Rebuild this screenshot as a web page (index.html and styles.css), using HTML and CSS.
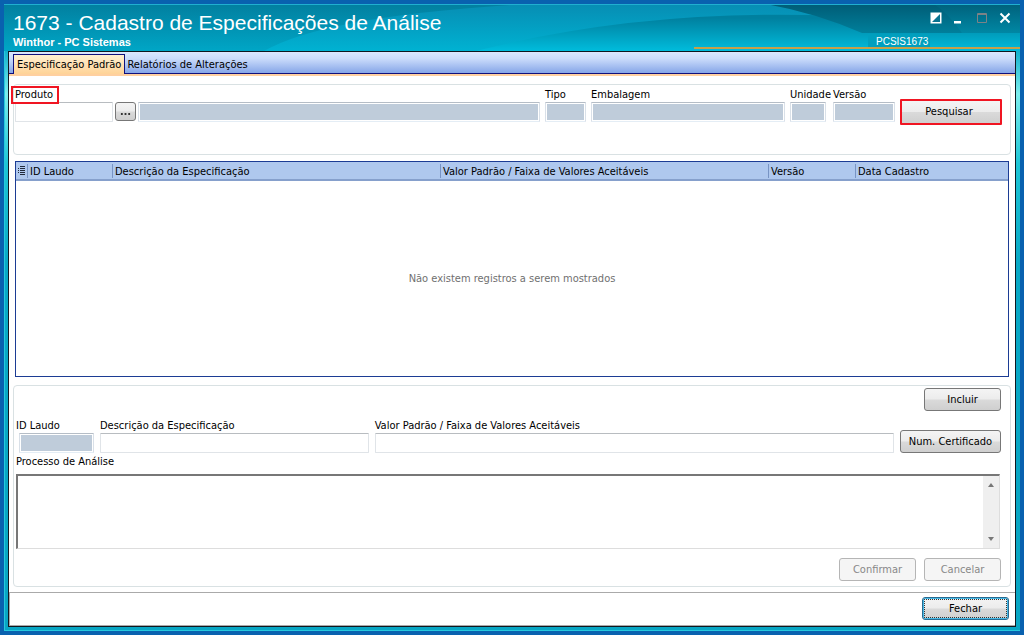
FILE: index.html
```html
<!DOCTYPE html>
<html lang="pt-BR">
<head>
<meta charset="utf-8">
<title>1673 - Cadastro de Especificações de Análise</title>
<link rel="stylesheet" href="styles.css">
</head>
<body>
<div class="window">
  <header class="titlebar">
    <svg class="titlebar-art" viewBox="0 0 1016 47" preserveAspectRatio="none" aria-hidden="true">
      <defs>
        <linearGradient id="base" x1="0" y1="0" x2="0" y2="1"><stop offset="0" stop-color="#027f9f"/><stop offset="1" stop-color="#00a6c6"/></linearGradient>
        <linearGradient id="sweep" gradientUnits="userSpaceOnUse" x1="0" y1="0" x2="0" y2="47"><stop offset="0" stop-color="#078db3"/><stop offset="1" stop-color="#00b2d2"/></linearGradient>
        <linearGradient id="glow" gradientUnits="userSpaceOnUse" x1="0" y1="14" x2="0" y2="47"><stop offset="0" stop-color="#00809f"/><stop offset="1" stop-color="#00bcdc"/></linearGradient>
        <linearGradient id="dark" gradientUnits="userSpaceOnUse" x1="0" y1="0" x2="0" y2="32"><stop offset="0" stop-color="#005c76"/><stop offset="1" stop-color="#00839f"/></linearGradient>
        <linearGradient id="corner" gradientUnits="userSpaceOnUse" x1="0" y1="0" x2="0" y2="32"><stop offset="0" stop-color="#00647f"/><stop offset="1" stop-color="#0090ad"/></linearGradient>
      </defs>
      <rect width="1016" height="47" fill="url(#base)"/>
      <path d="M260 47Q320 12 520 0H1016V47Z" fill="url(#sweep)"/>
      <path d="M472 47Q640 4 836 12Q930 14 1016 24V47Z" fill="url(#glow)"/>
      <path d="M762 0H1016V29H858Q812 9 762 0Z" fill="url(#dark)"/>
      <path d="M882 0H1016V29H958Q945 10 930 0Z" fill="url(#corner)" fill-opacity=".65"/>
      <path d="M864 30H926V43H864Z" fill="#009fbe"/>
      <path d="M0 .5H1016" stroke="#20afd0"/>
      <path d="M690 44H1016" stroke="#c5a04a" stroke-width="2"/>
    </svg>
    <div class="heading">
      <h1 class="title">1673 - Cadastro de Especificações de Análise</h1>
      <p class="subtitle">Winthor - PC Sistemas</p>
    </div>
    <div class="corner">
      <div class="window-buttons">
        <button class="icon-button" type="button" aria-label="Tema"><svg viewBox="0 0 12 12"><path d="M.5 .5H11.5V11.5H.5Z" fill="#fff"/><path d="M10 2V10H2Z" fill="#087391"/></svg></button>
        <button class="icon-button" type="button" aria-label="Minimizar"><svg viewBox="0 0 12 12"><path d="M1 9H8V11.5H1Z" fill="#fff"/></svg></button>
        <button class="icon-button" type="button" aria-label="Maximizar" disabled><svg viewBox="0 0 12 12"><path d="M1.5 1.5H10.5V10.5H1.5ZM1 2.5H11" fill="none" stroke="#7d8286"/></svg></button>
        <button class="icon-button" type="button" aria-label="Fechar janela"><svg viewBox="0 0 12 12"><path d="M1.5 1.5L10.5 10.5M10.5 1.5L1.5 10.5" stroke="#fff" stroke-width="2"/></svg></button>
      </div>
      <span class="user">PCSIS1673</span>
    </div>
  </header>
  <main class="client">
    <div class="tabs" role="tablist">
      <button class="tab tab-active" type="button" role="tab" aria-selected="true">Especificação Padrão</button>
      <button class="tab" type="button" role="tab" aria-selected="false">Relatórios de Alterações</button>
    </div>
    <div class="panel">
      <section class="group search">
        <div class="field product"><label class="marked" for="produto">Produto</label><div class="product-line"><input class="box" id="produto" type="text"><button class="button browse" type="button" aria-label="Procurar produto"><svg viewBox="0 0 12 4"><path d="M1 1H3V3H1ZM5 1H7V3H5ZM9 1H11V3H9Z" fill="#333"/></svg></button><input class="box" type="text" aria-label="Descrição do produto" disabled></div></div>
        <div class="field"><label for="tipo">Tipo</label><input class="box" id="tipo" type="text" disabled></div>
        <div class="field"><label for="embalagem">Embalagem</label><input class="box" id="embalagem" type="text" disabled></div>
        <div class="field"><label for="unidade">Unidade</label><input class="box unit-box" id="unidade" type="text" disabled></div>
        <div class="field"><label for="versao">Versão</label><input class="box" id="versao" type="text" disabled></div>
        <button class="button search-button" type="button">Pesquisar</button>
      </section>
      <div class="records">
        <table class="record-table">
          <colgroup><col class="col-menu"><col class="col-id"><col><col><col class="col-version"><col class="col-date"></colgroup>
          <thead><tr>
            <th class="menu-cell" aria-label="Colunas"><svg class="menu-icon" viewBox="0 0 9 10"><path d="M1 2.5H2M1 4.5H2M1 6.5H2M3 .5H8M3 2.5H8M3 4.5H8M3 6.5H8M3 8.5H8" stroke="#222b3c"/></svg></th>
            <th>ID Laudo</th><th>Descrição da Especificação</th><th>Valor Padrão / Faixa de Valores Aceitáveis</th><th>Versão</th><th>Data Cadastro</th>
          </tr></thead>
          <tbody><tr><td class="empty" colspan="6">Não existem registros a serem mostrados</td></tr></tbody>
        </table>
      </div>
      <section class="group details">
        <div class="actions"><button class="button" type="button">Incluir</button></div>
        <div class="detail-row">
          <div class="field id-field"><label for="id-laudo">ID Laudo</label><input class="box" id="id-laudo" type="text" disabled></div>
          <div class="field"><label for="descricao">Descrição da Especificação</label><input class="box" id="descricao" type="text"></div>
          <div class="field"><label for="valor">Valor Padrão / Faixa de Valores Aceitáveis</label><input class="box" id="valor" type="text"></div>
          <button class="button certificate" type="button">Num. Certificado</button>
        </div>
        <label class="process-label" for="processo">Processo de Análise</label>
        <div class="memo">
          <textarea class="memo-text" id="processo"></textarea>
          <div class="scrollbar" aria-hidden="true">
            <svg viewBox="0 0 8 4"><path d="M1 4L4 0L7 4Z" fill="#777"/></svg>
            <svg viewBox="0 0 8 4"><path d="M1 0L4 4L7 0Z" fill="#777"/></svg>
          </div>
        </div>
        <div class="actions"><button class="button" type="button" disabled>Confirmar</button><button class="button" type="button" disabled>Cancelar</button></div>
      </section>
    </div>
    <footer class="footer"><button class="button close-button" type="button">Fechar</button></footer>
  </main>
</div>
</body>
</html>
```
FILE: styles.css
```css
* { box-sizing: border-box; }
body {
  margin: 0;
  background: #0961af;
  color: #000;
  font: 11px/14px "DejaVu Sans Condensed", "Noto Sans", sans-serif;
}
button, input, textarea { font: inherit; color: inherit; margin: 0; }
svg { display: block; }

.window {
  display: flex;
  flex-direction: column;
  min-height: 100vh;
  padding: 0 4px 4px;
  border: 4px solid #0961af;
  background: linear-gradient(#00a6c6 40px, #7ceeee 90px, #1ec6d6 160px, #08a9c6 260px, #08a6c4);
  box-shadow: inset 5px -5px 0 -4px #25c9de;
}
.titlebar {
  position: relative;
  display: flex;
  justify-content: space-between;
  height: 47px;
  margin: 0 -4px;
  color: #fff;
  font-family: "Liberation Sans", Arial, sans-serif;
}
.titlebar-art { position: absolute; inset: 0; width: 100%; height: 100%; }
.heading { position: relative; padding: 7px 0 0 9px; }
.title { margin: 0; font-size: 21px; line-height: 24px; font-weight: 400; }
.subtitle { margin: 0; font-size: 11px; line-height: 14px; font-weight: 700; }
.corner { position: relative; width: 144px; padding: 8px 9px 0 0; }
.window-buttons { display: flex; justify-content: flex-end; gap: 11px; }
.icon-button { width: 12px; height: 12px; padding: 0; border: 0; background: none; }
.user { display: block; padding-top: 12px; font-size: 10px; line-height: 12px; }

.client {
  flex: 1;
  display: flex;
  flex-direction: column;
  border: 1px solid #101820;
  background: #fff;
}
.tabs {
  display: flex;
  height: 24px;
  padding: 2px 0 0 4px;
  border-bottom: 2px solid #ffd0a0;
  background: linear-gradient(#dbe8ff, #cbdcfb 30%, #86a6e8 21px, #10107c 21px, #10107c);
}
.tab { padding: 2px 2px 0; border: 0; background: none; white-space: nowrap; }
.tab-active {
  border: 1px solid #10107c;
  border-bottom: 0;
  padding: 1px 3px 0;
  background: linear-gradient(#fff0d2, #ffd397);
}
.panel { flex: 1; display: flex; flex-direction: column; padding: 8px 4px 5px; }
.group { border: 1px solid #d9e1e3; border-radius: 4px; }
.field { display: flex; flex-direction: column; min-width: 0; }
.field label { white-space: nowrap; }
.box {
  width: 100%;
  min-width: 0;
  height: 20px;
  padding: 0 3px;
  border: 1px solid #e0e4e8;
  border-top-color: #b8bcc0;
  border-radius: 1px;
  background: #fff;
}
.box:disabled { border-color: #b5bdc6 #d9e0e8 #e4edf5; background: #bfccda; box-shadow: inset 0 0 0 1px #fff; }

.search {
  display: grid;
  grid-template-columns: 5fr 41px 194px 38px 62px 102px;
  column-gap: 5px;
  align-items: start;
  height: 71px;
  padding: 3px 8px 0 1px;
}
.unit-box { width: 36px; }
.marked { position: relative; align-self: flex-start; margin: 0 0 0 -2px; padding: 0 4px 0 2px; outline: 2px solid #f01522; }
.product-line { display: grid; grid-template-columns: 98px 21px 1fr; gap: 2px; }

.records { flex: 1; display: flex; min-height: 216px; margin: 6px 2px 8px; border: 1px solid #1c3c94; }
.record-table { width: 100%; table-layout: fixed; border-collapse: separate; border-spacing: 0; }
.col-menu { width: 12px; }
.col-id { width: 85px; }
.col-version { width: 87px; }
.col-date { width: 152px; }
.record-table th {
  height: 19px;
  padding: 2px 2px 0;
  border-bottom: 2px solid #86a0cc;
  background: #afc8ee linear-gradient(#7894c4, #7894c4) right / 1px 14px no-repeat;
  font-weight: 400;
  text-align: left;
  white-space: nowrap;
}
.record-table th:last-child { background: #afc8ee; }
.record-table .menu-cell { padding: 0 1px; }
.menu-icon { width: 9px; height: 10px; }
.empty { padding: 0; color: #707070; text-align: center; }

.details { display: flex; flex-direction: column; padding: 2px 9px 5px 2px; }
.actions { display: flex; justify-content: flex-end; gap: 8px; }
.button {
  min-width: 77px;
  height: 23px;
  padding: 0 4px;
  border: 1px solid #777;
  border-radius: 3px;
  background: linear-gradient(#f4f4f4, #ececec 48%, #dadada 52%, #cfcfcf);
  white-space: nowrap;
}
.button.browse { min-width: 0; height: 19px; padding: 5px 4px 0; }
.browse svg { width: 11px; height: 4px; }
.button.search-button { height: 26px; margin-top: 11px; padding-right: 8px; border: 2px solid #f01522; border-radius: 1px; }
.button:disabled { border-color: #b5b5b5; background: #f5f5f5; color: #888; }
.detail-row { display: grid; grid-template-columns: 78px 268fr 518fr 101px; gap: 6px; margin-top: 8px; align-items: end; }
.id-field .box { width: 75px; margin-left: 3px; }
.process-label { margin-top: 2px; }
.memo { display: flex; height: 75px; margin: 5px 1px 9px 0; border: 1px solid #ddd; border-top: 2px solid #777; border-left: 2px solid #777; }
.memo-text { flex: 1; min-width: 0; padding: 2px; border: 0; resize: none; }
.scrollbar { display: flex; flex-direction: column; justify-content: space-between; align-items: center; width: 16px; padding: 7px 0; background: #efefef; }
.scrollbar svg { width: 8px; height: 4px; }
.footer { display: flex; justify-content: flex-end; padding: 4px 6px 5px; border: 1px solid #aaa; border-right: 0; }
.close-button { min-width: 87px; height: 23px; border-color: #286b91; box-shadow: inset 0 0 0 1px #47b9e6; outline: 1px dotted #333; outline-offset: -3px; }
```
